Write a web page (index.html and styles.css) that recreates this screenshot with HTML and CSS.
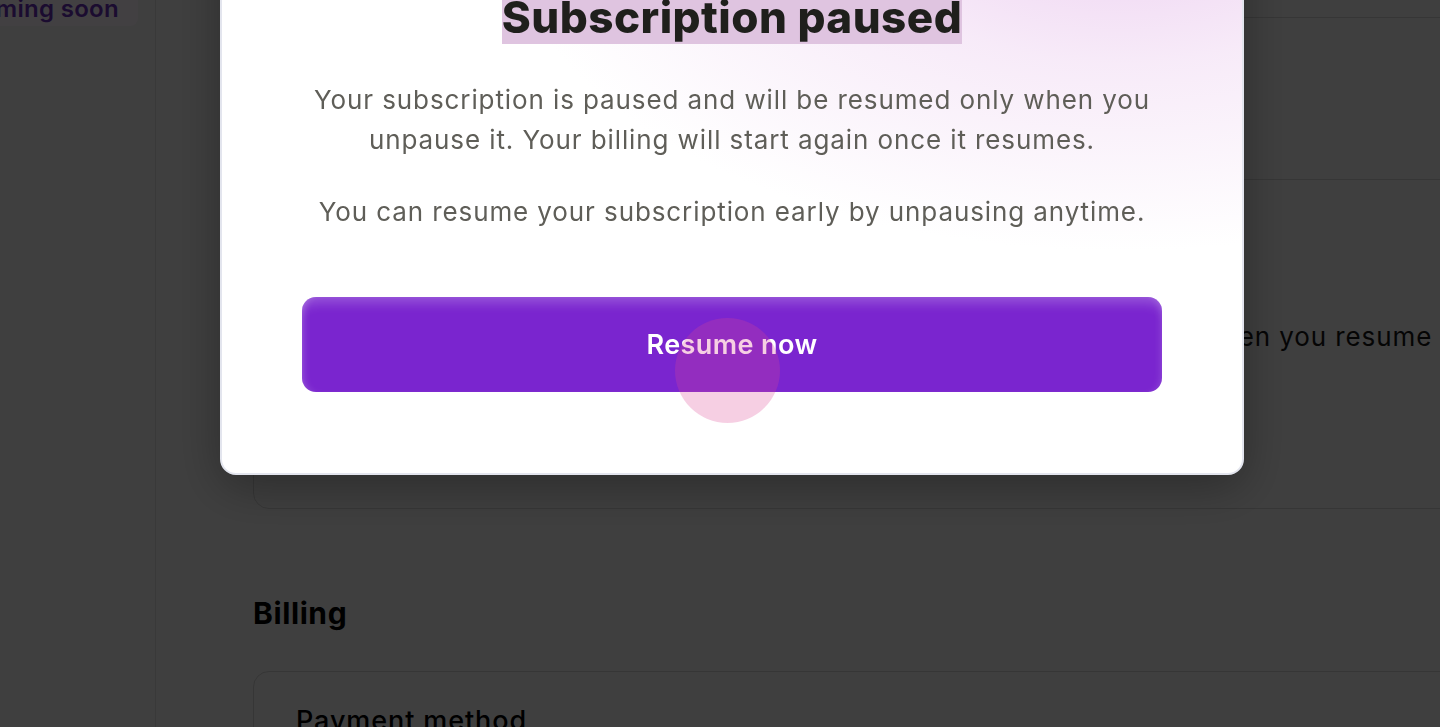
FILE: index.html
```html
<!DOCTYPE html>
<html lang="en">
<head>
<meta charset="utf-8">
<title>Subscription paused</title>
<link rel="stylesheet" href="styles.css">
</head>
<body>
<div class="page">
  <aside class="sidebar">
    <nav class="nav">
      <div class="nav-item">
        <span class="badge">Coming soon</span>
      </div>
    </nav>
  </aside>
  <main class="main">
    <section class="card">
      <div class="row row-a">
        <h3 class="row-title">Current plan</h3>
        <p class="row-text">Pro · Monthly</p>
      </div>
      <div class="row row-b">
        <h3 class="row-title">Status</h3>
        <p class="row-text">Paused</p>
      </div>
      <div class="row row-c">
        <svg class="row-icon" viewBox="0 0 28 28" width="28" height="28" aria-hidden="true">
          <circle cx="14" cy="14" r="12" fill="none" stroke="#444" stroke-width="2"/>
          <path d="M11 9v10M17 9v10" stroke="#444" stroke-width="2" stroke-linecap="round"/>
        </svg>
        <div class="row-body">
          <h3 class="row-title">Pause subscription</h3>
          <p class="row-desc">Your plan, saved work and settings stay safe. Billing only restarts when you resume</p>
          <button class="ghost-btn" type="button">Resume</button>
        </div>
      </div>
    </section>

    <h2 class="section-title">Billing</h2>

    <section class="card card-billing">
      <div class="row row-pay">
        <h3 class="row-title-lg">Payment method</h3>
      </div>
    </section>
  </main>
</div>

<div class="overlay"></div>

<div class="modal" role="dialog" aria-labelledby="mtitle">
  <h1 class="modal-title" id="mtitle"><span class="hl">Subscription paused</span></h1>
  <p class="modal-text">Your subscription is paused and will be resumed only when you unpause it. Your billing will start again once it resumes.</p>
  <p class="modal-text second">You can resume your subscription early by unpausing anytime.</p>
  <button class="primary-btn" type="button">Resume now</button>
</div>

<div class="click-dot"></div>
</body>
</html>
```

FILE: styles.css
```css
* { box-sizing: border-box; }

html, body {
  margin: 0;
  padding: 0;
  width: 1440px;
  height: 727px;
  overflow: hidden;
  background: #f2f2f2;
  font-family: "Inter", "Noto Sans", "Liberation Sans", sans-serif;
  color: #111;
}

.page {
  display: flex;
  height: 727px;
  overflow: hidden;
}

.sidebar {
  width: 156px;
  flex: 0 0 156px;
  border-right: 1px solid #dadada;
  overflow: visible;
}

.nav {
  margin-top: -10px;
}

.nav-item {
  display: flex;
  justify-content: flex-end;
  padding-right: 17px;
}

.badge {
  display: inline-flex;
  align-items: center;
  height: 36px;
  padding: 0 19px;
  border-radius: 8px;
  background: #fff6ff;
  color: #6a30b8;
  font-weight: 600;
  font-size: 24px;
  letter-spacing: 0.3px;
  white-space: nowrap;
  flex-shrink: 0;
}

.main {
  flex: 0 0 auto;
  padding-left: 97px;
  margin-top: -105px;
}

.card {
  width: 1320px;
  border: 1px solid #d0d0d0;
  border-radius: 16px;
}

.row {
  padding: 0 42px;
}

.row + .row {
  border-top: 1px solid #d0d0d0;
}

.row-a {
  height: 121px;
  padding-top: 30px;
}

.row-b {
  height: 162px;
  padding-top: 40px;
}

.row-title {
  margin: 0;
  font-size: 26px;
  line-height: 39px;
  font-weight: 600;
  color: #111;
}

.row-text {
  margin: 8px 0 0;
  font-size: 24px;
  line-height: 36px;
  color: #333;
}

.row-c {
  display: flex;
  align-items: flex-start;
  gap: 12px;
  padding-top: 88px;
  padding-bottom: 64px;
}

.row-icon {
  flex: 0 0 28px;
  margin-top: 6px;
}

.row-body {
  min-width: 0;
}

.row-desc {
  margin: 10px 0 0;
  font-size: 26px;
  line-height: 39px;
  letter-spacing: 0.9px;
  color: #161616;
  white-space: nowrap;
}

.ghost-btn {
  margin-top: 36px;
  height: 52px;
  padding: 0 28px;
  border: 1px solid #d0d0d0;
  border-radius: 10px;
  background: #fff;
  font-family: inherit;
  font-size: 22px;
  font-weight: 600;
  color: #111;
}

.section-title {
  margin: 86px 0 40px;
  font-size: 30px;
  line-height: 36px;
  font-weight: 700;
  letter-spacing: 0.6px;
  color: #000;
}

.row-pay {
  padding-top: 29px;
  height: 200px;
}

.row-title-lg {
  margin: 0;
  font-size: 27px;
  line-height: 39px;
  font-weight: 500;
  letter-spacing: 0.9px;
  color: #000;
}

.overlay {
  position: fixed;
  inset: 0;
  background: rgba(0, 0, 0, 0.74);
}

.modal {
  position: fixed;
  left: 220px;
  top: -91px;
  width: 1024px;
  padding: 80px 80px 81px;
  border: 2px solid #e3e5ee;
  border-radius: 16px;
  background:
    radial-gradient(ellipse 620px 340px at 88% 0%, rgba(236, 206, 240, 0.95) 0%, rgba(243, 224, 245, 0.65) 45%, rgba(255, 255, 255, 0) 100%),
    #fff;
  box-shadow: 0 12px 48px rgba(0, 0, 0, 0.3);
  text-align: center;
}

.modal-title {
  margin: 0;
  font-size: 44px;
  line-height: 53px;
  font-weight: 800;
  letter-spacing: 0.45px;
  color: #1f1f1c;
}

.hl {
  background: #dfc4e0;
}

.modal-text {
  margin: 36px 0 0;
  font-size: 26px;
  line-height: 40px;
  letter-spacing: 0.9px;
  color: #5f5e58;
}

.modal-text.second {
  margin-top: 32px;
}

.primary-btn {
  display: block;
  width: 100%;
  height: 95px;
  margin-top: 65px;
  border: none;
  border-radius: 14px;
  background: #7a25cf;
  box-shadow:
    inset 0 14px 12px -8px rgba(255, 255, 255, 0.22),
    inset 6px 0 8px -6px rgba(255, 255, 255, 0.3),
    inset -6px 0 8px -6px rgba(255, 255, 255, 0.2);
  color: #fff;
  font-family: inherit;
  font-size: 27px;
  font-weight: 600;
  letter-spacing: 0.4px;
}

.click-dot {
  position: fixed;
  left: 675px;
  top: 318px;
  width: 105px;
  height: 105px;
  border-radius: 50%;
  background: rgba(222, 70, 146, 0.26);
}
```
